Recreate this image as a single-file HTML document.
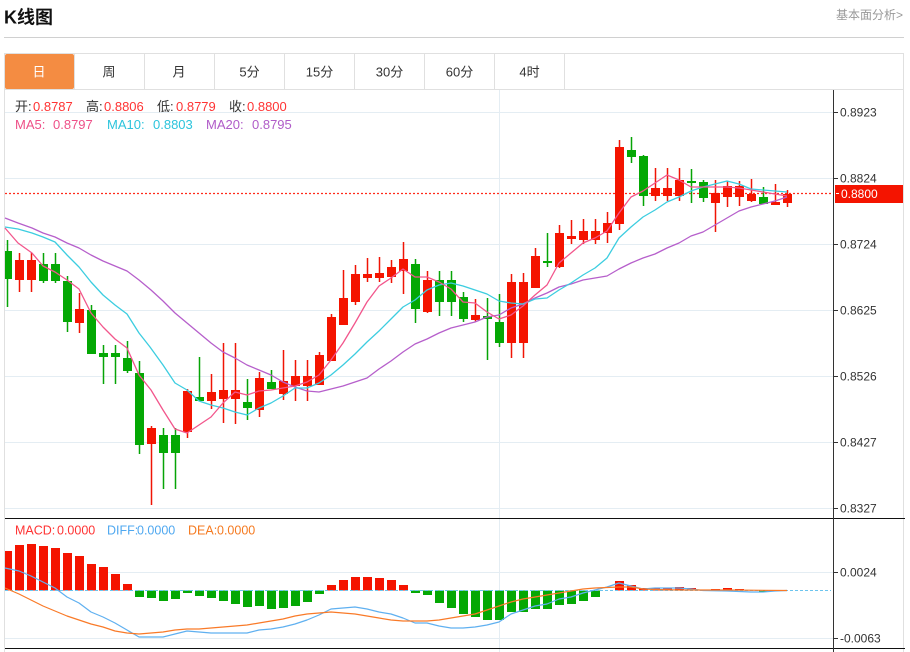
<!DOCTYPE html>
<html lang="zh">
<head>
<meta charset="utf-8">
<title>K线图</title>
<style>
html,body{margin:0;padding:0;width:910px;height:652px;overflow:hidden;background:#fff}
svg{display:block;position:absolute;left:0;top:0}
text{font-family:"Liberation Sans","Noto Sans CJK SC",sans-serif}
</style>
</head>
<body>
<svg width="910" height="652" viewBox="0 0 910 652" xmlns="http://www.w3.org/2000/svg">
<text x="4" y="23.5" font-size="18" font-weight="bold" fill="#111">K线图</text>
<text x="836" y="19" font-size="12" fill="#999">基本面分析&gt;</text>
<path d="M4 37.5H904" stroke="#d0d0d0" fill="none"/>
<path d="M4.5 53.5H903.5M4.5 53V652M903.5 53V652M4 89.5H904M74.5 53V89M144.5 53V89M214.5 53V89M284.5 53V89M354.5 53V89M424.5 53V89M494.5 53V89M564.5 53V89" stroke="#e0e0e0" fill="none"/>
<rect x="5" y="54" width="69" height="35" rx="2" fill="#f48c42"/>
<g font-size="13" fill="#333" text-anchor="middle">
<text x="39" y="76.5" fill="#fff">日</text>
<text x="109" y="76.5">周</text>
<text x="179" y="76.5">月</text>
<text x="249.5" y="76.5">5分</text>
<text x="319.5" y="76.5">15分</text>
<text x="389.5" y="76.5">30分</text>
<text x="459.5" y="76.5">60分</text>
<text x="529.5" y="76.5">4时</text>
</g>
<path d="M5 112.5H833M5 178.5H833M5 244.5H833M5 310.5H833M5 376.5H833M5 442.5H833M5 508.5H833M5 572.5H833M5 638.5H833M499.5 90V652" stroke="#e4edf3" fill="none"/>
<path d="M5 193.5H833" stroke="#ff2a1a" stroke-width="1.2" stroke-dasharray="2 2" fill="none"/>
<path d="M19.5 253V292M31.5 253V292M79.5 293V333M151.5 426V505M187.5 389V438M211.5 374V409M223.5 343V423M235.5 343V424M259.5 372V417M283.5 350V400M295.5 360V401M307.5 360V401M319.5 352V385M331.5 314V361M343.5 270V325M355.5 265V305M367.5 258V282M379.5 257V282M391.5 260V283M403.5 242V294M427.5 271V313M475.5 299V322M511.5 274V358M523.5 273V358M535.5 248V288M559.5 225V268M571.5 220V244M583.5 219V244M595.5 219V244M607.5 212V243M619.5 140V230M655.5 168V201M667.5 168V201M679.5 168V201M715.5 180V232M727.5 181V207M739.5 181V206M751.5 179V202M775.5 184V205M787.5 190V207" stroke="#f01405" stroke-width="1.5" fill="none"/>
<path d="M7.5 240V307M43.5 253V283M55.5 253V283M67.5 276V332M91.5 305V354M103.5 345V384M115.5 345V384M127.5 341V373M139.5 361V454M163.5 428V489M175.5 428V489M199.5 357V401M247.5 379V420M271.5 370V389M415.5 259V323M439.5 271V316M451.5 271V316M463.5 292V322M487.5 298V360M499.5 294V347M547.5 233V267M631.5 137V163M643.5 155V206M691.5 169V203M703.5 180V202M763.5 187V204" stroke="#06a406" stroke-width="1.5" fill="none"/>
<path fill="#f41400" d="M15 260h9v20h-9zM27 260h9v20h-9zM75 309h9v14h-9zM147 428h9v16h-9zM183 391h9v41h-9zM207 392h9v9h-9zM219 390h9v9h-9zM231 390h9v9h-9zM255 378h9v32h-9zM279 381h9v13h-9zM291 376h9v10h-9zM303 376h9v10h-9zM315 355h9v30h-9zM327 317h9v44h-9zM339 298h9v27h-9zM351 274h9v28h-9zM363 274h9v4h-9zM375 273h9v5h-9zM387 267h9v10h-9zM399 259h9v12h-9zM423 280h9v32h-9zM471 315h9v5h-9zM507 282h9v61h-9zM519 282h9v61h-9zM531 256h9v32h-9zM555 233h9v34h-9zM567 236h9v3h-9zM579 231h9v9h-9zM591 231h9v9h-9zM603 223h9v10h-9zM615 147h9v77h-9zM651 188h9v8h-9zM663 188h9v8h-9zM675 180h9v16h-9zM711 193h9v10h-9zM723 186h9v11h-9zM735 186h9v11h-9zM747 194h9v7h-9zM771 202h9v3h-9zM783 194h9v9h-9z"/>
<path fill="#04a804" d="M5 251h7v28h-7zM39 264h9v17h-9zM51 264h9v17h-9zM63 281h9v41h-9zM87 310h9v44h-9zM99 353h9v4h-9zM111 353h9v4h-9zM123 358h9v13h-9zM135 373h9v72h-9zM159 435h9v18h-9zM171 435h9v18h-9zM195 397h9v4h-9zM243 402h9v6h-9zM267 382h9v7h-9zM411 264h9v45h-9zM435 280h9v22h-9zM447 280h9v22h-9zM459 297h9v22h-9zM483 316h9v3h-9zM495 322h9v21h-9zM543 261h9v2h-9zM627 150h9v7h-9zM639 156h9v40h-9zM687 181h9v2h-9zM699 182h9v16h-9zM759 197h9v7h-9z"/>
<g fill="none" stroke-width="1.3" stroke-linejoin="round">
<path stroke="#b65fcb" d="M5 218L18 223 32 228 43 233 55 237 67 243 79 248 91 255 103 261 115 266 127 271 139 280 151 290 163 301 175 313 187 323 199 333 211 343 223 352 235 358 247 365 259 370 271 375 283 382 295 387 307 391 319 392 331 389 343 386 355 382 367 378 379 369 391 361 403 352 415 344 427 339 439 333 451 328 463 325 475 322 487 317 499 315 511 308 523 304 535 298 547 293 559 287 571 284 583 280 595 278 607 276 619 269 631 263 643 258 655 254 667 248 679 243 691 236 703 232 715 225 727 218 739 211 751 207 763 204 775 201 787 197"/>
<path stroke="#3ccde0" d="M5 227L18 229 32 233 43 237 55 242 67 255 79 267 91 282 103 295 115 305 127 314 139 333 150 347 163 365 175 383 187 390 199 401 211 405 223 408 235 412 247 415 259 408 271 403 283 396 295 388 307 388 319 383 331 375 343 365 355 354 367 342 379 331 391 319 403 307 415 300 427 290 439 285 451 283 463 286 475 290 487 294 499 301 511 303 523 304 535 299 547 298 559 290 571 283 583 275 595 268 607 258 619 238 631 227 643 217 655 210 667 202 679 197 691 191 703 187 715 184 727 181 739 184 751 189 763 190 775 191 787 192"/>
<path stroke="#f2568c" d="M5 228L18 243 32 253 43 266 55 272 67 280 79 289 91 313 103 327 115 339 127 348 139 375 151 390 163 410 175 429 187 433 199 425 211 417 223 403 235 392 247 395 259 391 271 390 283 388 295 386 307 382 319 375 331 360 343 343 355 323 367 302 379 286 391 278 403 269 415 277 427 277 439 282 451 289 463 302 475 303 487 312 499 319 511 315 523 306 535 295 547 285 559 263 571 253 583 243 595 238 607 231 619 213 631 197 643 191 655 183 667 175 679 180 691 187 703 187 715 187 727 187 739 188 751 190 763 192 775 194 787 196"/>
</g>
<path d="M5 518.5H905M5 648.5H905" stroke="#111" fill="none"/>
<path d="M833.5 90V652" stroke="#333" fill="none"/>
<path d="M834 112.5h4M834 178.5h4M834 244.5h4M834 310.5h4M834 376.5h4M834 442.5h4M834 508.5h4M834 572.5h4M834 638.5h4" stroke="#333" fill="none"/>
<rect x="835" y="185" width="68" height="18" fill="#f41400"/>
<path d="M836 193.5h3" stroke="#fff" fill="none"/>
<g font-size="12" fill="#333">
<text x="840" y="116.5">0.8923</text>
<text x="840" y="182.5">0.8824</text>
<text x="840" y="248.5">0.8724</text>
<text x="840" y="314.5">0.8625</text>
<text x="840" y="380.5">0.8526</text>
<text x="840" y="446.5">0.8427</text>
<text x="840" y="512.5">0.8327</text>
<text x="840" y="576.5">0.0024</text>
<text x="840" y="642.5">-0.0063</text>
<text x="841" y="198" fill="#fff">0.8800</text>
</g>
<g font-size="13">
<text x="15" y="111" fill="#333">开:</text><text x="33" y="111" fill="#f33">0.8787</text>
<text x="86" y="111" fill="#333">高:</text><text x="104" y="111" fill="#f33">0.8806</text>
<text x="157" y="111" fill="#333">低:</text><text x="176" y="111" fill="#f33">0.8779</text>
<text x="229" y="111" fill="#333">收:</text><text x="247" y="111" fill="#f33">0.8800</text>
<text x="15" y="129" fill="#ee5088">MA5:</text><text x="53" y="129" fill="#ee5088">0.8797</text>
<text x="107" y="129" fill="#2cc4dc">MA10:</text><text x="153" y="129" fill="#2cc4dc">0.8803</text>
<text x="206" y="129" fill="#b05cc8">MA20:</text><text x="252" y="129" fill="#b05cc8">0.8795</text>
</g>
<g font-size="12.5">
<text x="15" y="534.5" fill="#f33">MACD:</text><text x="57" y="534.5" fill="#f33">0.0000</text>
<text x="107" y="534.5" fill="#4fa8f0">DIFF:</text><text x="137" y="534.5" fill="#4fa8f0">0.0000</text>
<text x="188" y="534.5" fill="#f57a20">DEA:</text><text x="217" y="534.5" fill="#f57a20">0.0000</text>
</g>
<path fill="#f41400" d="M5 551h7V590.5h-7zM15 545h9V590.5h-9zM27 544h9V590.5h-9zM39 546h9V590.5h-9zM51 548h9V590.5h-9zM63 553h9V590.5h-9zM75 556h9V590.5h-9zM87 564h9V590.5h-9zM99 567h9V590.5h-9zM111 574h9V590.5h-9zM123 584h9V590.5h-9zM327 585h9V590.5h-9zM339 580h9V590.5h-9zM351 577h9V590.5h-9zM363 577h9V590.5h-9zM375 578h9V590.5h-9zM387 580h9V590.5h-9zM399 585h9V590.5h-9zM615 581h9V590.5h-9zM627 585h9V590.5h-9zM639 588h9V590.5h-9zM651 588h9V590.5h-9zM663 588h9V590.5h-9zM675 587h9V590.5h-9zM687 588h9V590.5h-9zM699 590h9V590.5h-9zM711 589h9V590.5h-9zM723 588h9V590.5h-9zM735 589h9V590.5h-9z"/>
<path fill="#04a804" d="M135 590.5h9V597h-9zM147 590.5h9V598h-9zM159 590.5h9V601h-9zM171 590.5h9V599h-9zM183 590.5h9V593h-9zM195 590.5h9V596h-9zM207 590.5h9V598h-9zM219 590.5h9V601h-9zM231 590.5h9V604h-9zM243 590.5h9V607h-9zM255 590.5h9V606h-9zM267 590.5h9V609h-9zM279 590.5h9V608h-9zM291 590.5h9V606h-9zM303 590.5h9V602h-9zM315 590.5h9V594h-9zM411 590.5h9V593h-9zM423 590.5h9V595h-9zM435 590.5h9V603h-9zM447 590.5h9V608h-9zM459 590.5h9V614h-9zM471 590.5h9V617h-9zM483 590.5h9V620h-9zM495 590.5h9V620h-9zM507 590.5h9V612h-9zM519 590.5h9V612h-9zM531 590.5h9V609h-9zM543 590.5h9V609h-9zM555 590.5h9V605h-9zM567 590.5h9V604h-9zM579 590.5h9V601h-9zM591 590.5h9V597h-9zM759 590.5h9V592h-9z"/>
<path d="M5 590.5H831" stroke="#6cc4ee" stroke-dasharray="3 2" fill="none"/>
<g fill="none" stroke-width="1.2" stroke-linejoin="round">
<path stroke="#5fb0f0" d="M5 568L19 571 31 576 43 582 55 588 67 597 79 603 91 612 103 617 115 623 127 630 139 637 151 637 163 637 175 634 187 631 199 632 211 633 223 633 235 633 247 633 259 630 271 629 283 627 295 624 307 620 319 615 331 609 343 608 355 607 367 609 379 612 391 614 403 618 415 623 427 623 439 626 451 628 463 628 475 627 487 625 499 622 511 614 523 610 535 606 547 604 559 599 571 597 583 593 595 590 607 587 619 583 631 586 643 589 655 588 667 588 679 588 691 589 703 590.5 727 591 751 592 763 592 775 591 787 590.5"/>
<path stroke="#f97a28" d="M5 588L19 594 31 600 43 606 55 611 67 616 79 620 91 624 103 627 115 631 127 633 139 634 151 633 163 632 175 630 187 629 199 629 211 628 223 627 235 626 247 625 259 623 271 621 283 619 295 616 307 614 319 613 331 612 343 613 355 614 367 616 379 618 391 620 403 621 415 621 427 621 439 620 451 618 463 616 475 614 487 610 499 606 511 602 523 599 535 597 547 595 559 593 571 591 583 589 595 588 607 587.5 619 587 631 587 643 589 655 589.5 679 590 727 590 787 590.5"/>
</g>
</svg>
</body>
</html>
